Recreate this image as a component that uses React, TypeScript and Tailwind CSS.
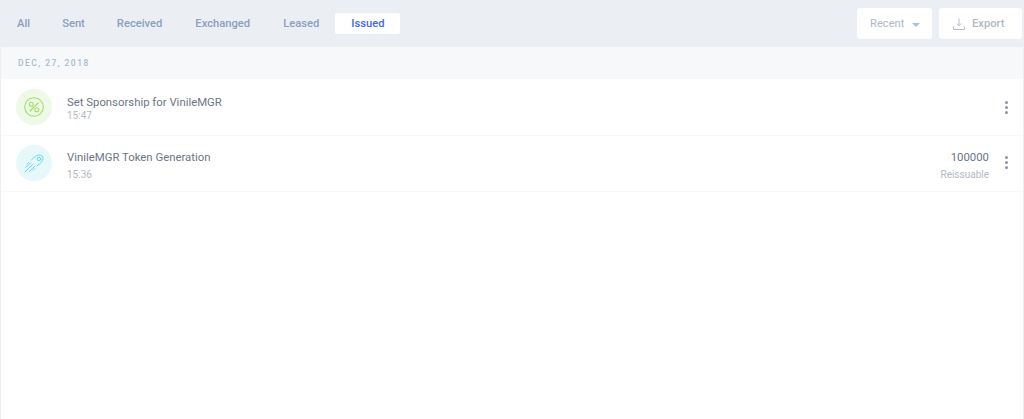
const tabs = ["All", "Sent", "Received", "Exchanged", "Leased", "Issued"];

function Dots() {
  return (
    <div className="flex w-[3px] flex-col gap-[2px]">
      <span className="h-[3px] w-[3px] rounded-full bg-[#8a94a5]" />
      <span className="h-[3px] w-[3px] rounded-full bg-[#8a94a5]" />
      <span className="h-[3px] w-[3px] rounded-full bg-[#8a94a5]" />
    </div>
  );
}

function PercentIcon() {
  return (
    <svg width="20" height="20" viewBox="0 0 20 20" fill="none" stroke="#a3de68" strokeWidth="1.1">
      <circle cx="10" cy="10" r="9.3" />
      <circle cx="7.2" cy="7.2" r="2" />
      <circle cx="12.8" cy="12.8" r="2" />
      <path d="M14 6 L6 14" strokeLinecap="round" />
    </svg>
  );
}

function RocketIcon() {
  return (
    <svg width="20" height="19" viewBox="0 0 20 19" fill="none" stroke="#6adbe9" strokeWidth="1" strokeLinecap="round">
      <path d="M7.5 6 C9.5 3.5 12 1.5 14.5 1 C17.5 0.5 19.3 2 19 5 C18.5 7.5 16 10 13 12" />
      <circle cx="15" cy="5" r="1.8" />
      <path d="M7 8.5 L1.5 13.5" />
      <path d="M9 10 L1 18" />
      <path d="M11 12 L5.5 17.5" />
      <path d="M4.5 8.5 L3 10" />
      <path d="M11 14.5 L9 16.5" />
    </svg>
  );
}

export default function App() {
  return (
    <div className="flex h-[419px] w-[1024px] flex-col overflow-hidden bg-[#ebeef3] font-['Roboto',sans-serif]">
      <div className="flex h-[47px] shrink-0 items-start justify-between pl-[1px] pr-[2px]">
        <div className="mt-[13px] flex">
          {tabs.map((t) => (
            <div
              key={t}
              className={
                t === "Issued"
                  ? "flex h-[21px] items-center rounded-[2px] bg-white px-4 pt-[1px] text-[11.2px] font-medium text-[#3f67f5]"
                  : t === "Exchanged"
                    ? "mx-[1px] flex h-[21px] items-center px-4 pt-[1px] text-[11.2px] font-medium text-[#8c9fc0]"
                    : "flex h-[21px] items-center px-4 pt-[1px] text-[11.2px] font-medium text-[#8c9fc0]"
              }
            >
              {t}
            </div>
          ))}
        </div>
        <div className="mt-[8px] flex gap-[7px]">
          <div className="flex h-[31px] w-[75px] items-center rounded-[3px] bg-white pl-[13px] pt-[2px] text-[11.2px] text-[#b0b8c5]">
            Recent
            <span className="ml-[8px] h-0 w-0 border-x-[4px] border-t-[4px] border-x-transparent border-t-[#a9c0e0]" />
          </div>
          <div className="flex h-[31px] w-[83px] items-center rounded-[3px] bg-white pl-[14px] pt-[2px] text-[11.2px] font-medium text-[#b0b8c5]">
            <svg width="12" height="12" viewBox="0 0 12 12" fill="none" stroke="#b5bcc8" strokeWidth="1" className="mr-[7px] -mt-[2px]">
              <path d="M6 0.5 V7.5 M3.8 5.5 L6 7.8 L8.2 5.5" />
              <path d="M0.5 8.5 V11.5 H11.5 V8.5" />
            </svg>
            Export
          </div>
        </div>
      </div>
      <div className="mx-[1px] flex flex-1 flex-col rounded-t-[2px] bg-white">
        <div className="flex h-[32px] shrink-0 items-center bg-[#f6f8fa] pl-[17px] text-[8.5px] font-medium tracking-[0.17em] text-[#a9bad3]">
          DEC, 27, 2018
        </div>
        <div className="flex h-[57px] shrink-0 items-center border-b border-[#f7f8fa] pl-[15px] pr-[15px]">
          <div className="flex h-[36px] w-[36px] items-center justify-center rounded-full bg-[#eff9e7]">
            <PercentIcon />
          </div>
          <div className="ml-[15px] flex-1 pt-[2px]">
            <div className="text-[11.35px] leading-[14px] text-[#6d7686]">Set Sponsorship for VinileMGR</div>
            <div className="mt-[1px] text-[10px] leading-[12px] text-[#b3bac6]">15:47</div>
          </div>
          <Dots />
        </div>
        <div className="flex h-[56px] shrink-0 items-start border-b border-[#f7f8fa] pl-[15px] pr-[15px]">
          <div className="mt-[9px] flex h-[36px] w-[36px] items-center justify-center rounded-full bg-[#e6f8fa]">
            <RocketIcon />
          </div>
          <div className="ml-[15px] mt-[14px] flex-1">
            <div className="text-[11.35px] leading-[14px] text-[#6d7686]">VinileMGR Token Generation</div>
            <div className="mt-[5px] text-[10px] leading-[12px] text-[#b3bac6]">15:36</div>
          </div>
          <div className="mr-[16px] mt-[14px] text-right">
            <div className="text-[11.35px] leading-[14px] text-[#6d7686]">100000</div>
            <div className="mt-[5px] text-[10px] leading-[12px] text-[#b3bac6]">Reissuable</div>
          </div>
          <div className="mt-[20px]">
            <Dots />
          </div>
        </div>
      </div>
    </div>
  );
}
